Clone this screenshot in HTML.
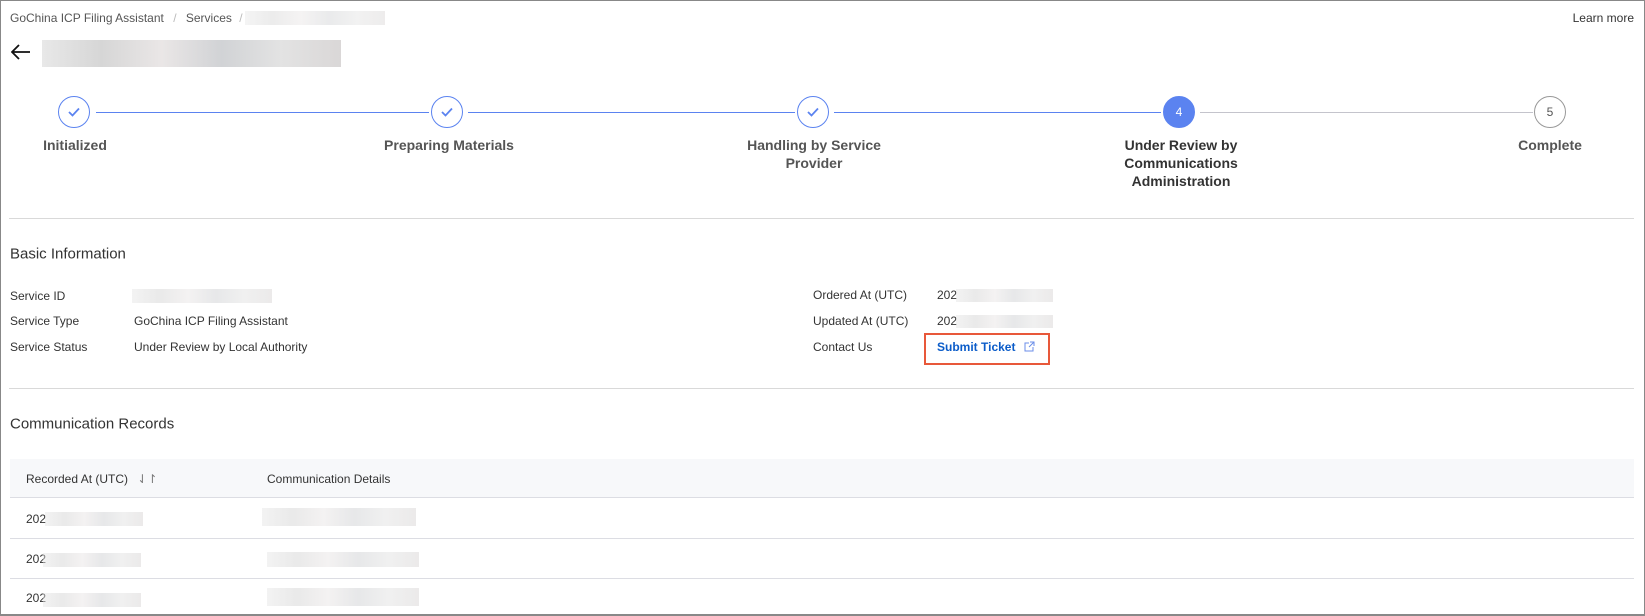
<!DOCTYPE html>
<html><head><meta charset="utf-8"><style>
*{margin:0;padding:0;box-sizing:border-box}
body{width:1645px;height:616px;overflow:hidden;background:#fff;font-family:"Liberation Sans",sans-serif;color:#333;font-size:12px;position:relative}
.frame{position:absolute;left:0;top:0;width:1645px;height:616px;border:1px solid #888;border-bottom:2px solid #888}
.a{position:absolute;white-space:nowrap}
.v{transform:translateY(-50%)}
.blur{position:absolute;background:linear-gradient(90deg,#e4e4e4,#cfcfcf 20%,#e6e2e2 40%,#c9cbce 60%,#dedede 80%,#d3d0d0);opacity:.85}
.circ{position:absolute;width:32px;height:32px;border-radius:50%;border:1px solid #5b83f0;top:96px;display:flex;align-items:center;justify-content:center;background:#fff}
.lbl{position:absolute;top:136px;font-weight:bold;font-size:14px;color:#555;text-align:center;line-height:18px;transform:translateX(-50%)}
.line{position:absolute;top:112px;height:1px}
.hr{position:absolute;left:9px;width:1625px;height:1px;background:#d9d9d9}
</style></head><body>
<div class="frame"></div>
<div class="a v" style="left:10px;top:18px;color:#555">GoChina ICP Filing Assistant <span style="color:#bbb;margin:0 6px">/</span> Services <span style="color:#bbb;margin:0 4px">/</span></div>
<div class="blur" style="left:245px;top:11px;width:140px;height:14px;opacity:.4"></div>
<div class="a v" style="right:11px;top:18px;color:#333">Learn more</div>
<svg class="a" style="left:11px;top:44px" width="20" height="16" viewBox="0 0 20 16"><path d="M19 8H2M8 1L1 8l7 7" fill="none" stroke="#111" stroke-width="1.8"/></svg>
<div class="blur" style="left:42px;top:40px;width:299px;height:27px"></div>

<div class="line" style="left:96px;width:333px;background:#5b83f0"></div>
<div class="line" style="left:468px;width:327px;background:#5b83f0"></div>
<div class="line" style="left:834px;width:327px;background:#5b83f0"></div>
<div class="line" style="left:1200px;width:333px;background:#c4c4cc"></div>
<div class="circ" style="left:58px"><svg width="12" height="10"><path d="M1 5l3.5 3.5L11 1.5" fill="none" stroke="#5b83f0" stroke-width="1.8"/></svg></div>
<div class="circ" style="left:431px"><svg width="12" height="10"><path d="M1 5l3.5 3.5L11 1.5" fill="none" stroke="#5b83f0" stroke-width="1.8"/></svg></div>
<div class="circ" style="left:797px"><svg width="12" height="10"><path d="M1 5l3.5 3.5L11 1.5" fill="none" stroke="#5b83f0" stroke-width="1.8"/></svg></div>
<div class="circ" style="left:1163px;background:#5b83f0;color:#fff;font-size:12px">4</div>
<div class="circ" style="left:1534px;border-color:#999;color:#555;font-size:12px">5</div>
<div class="lbl" style="left:75px">Initialized</div>
<div class="lbl" style="left:449px">Preparing Materials</div>
<div class="lbl" style="left:814px">Handling by Service<br>Provider</div>
<div class="lbl" style="left:1181px;color:#333">Under Review by<br>Communications<br>Administration</div>
<div class="lbl" style="left:1550px">Complete</div>

<div class="hr" style="top:218px"></div>
<div class="a v" style="left:10px;top:254px;font-size:15px;color:#333">Basic Information</div>
<div class="a v" style="left:10px;top:296px">Service ID</div>
<div class="blur" style="left:132px;top:289px;width:140px;height:14px;opacity:.45"></div>
<div class="a v" style="left:10px;top:321px">Service Type</div>
<div class="a v" style="left:134px;top:321px">GoChina ICP Filing Assistant</div>
<div class="a v" style="left:10px;top:347px">Service Status</div>
<div class="a v" style="left:134px;top:347px">Under Review by Local Authority</div>
<div class="a v" style="left:813px;top:295px">Ordered At (UTC)</div>
<div class="a v" style="left:937px;top:295px">202</div>
<div class="blur" style="left:956px;top:289px;width:97px;height:13px;opacity:.45"></div>
<div class="a v" style="left:813px;top:321px">Updated At (UTC)</div>
<div class="a v" style="left:937px;top:321px">202</div>
<div class="blur" style="left:956px;top:315px;width:97px;height:13px;opacity:.45"></div>
<div class="a v" style="left:813px;top:347px">Contact Us</div>
<div class="a" style="left:924px;top:333px;width:126px;height:32px;border:2px solid #e8583a"></div>
<div class="a v" style="left:937px;top:347px;color:#0b5cc9;font-weight:bold">Submit Ticket</div>
<svg class="a" style="left:1024px;top:341px" width="11" height="11" viewBox="0 0 11 11"><path d="M9 6v4H1V2h4M6 1h4v4M10 1L5 6" fill="none" stroke="#6b8ee8" stroke-width="1"/></svg>

<div class="hr" style="top:388px"></div>
<div class="a v" style="left:10px;top:424px;font-size:15px">Communication Records</div>
<div class="a" style="left:10px;top:459px;width:1624px;height:39px;background:#f7f8fa;border-bottom:1px solid #dcdde3"></div>
<div class="a v" style="left:26px;top:479px">Recorded At (UTC) <span style="color:#777;margin-left:6px;font-size:12px">⇃↾</span></div>
<div class="a v" style="left:267px;top:479px">Communication Details</div>
<div class="a" style="left:10px;top:538px;width:1624px;height:1px;background:#dcdde3"></div>
<div class="a" style="left:10px;top:578px;width:1624px;height:1px;background:#dcdde3"></div>
<div class="a v" style="left:26px;top:519px">202</div><div class="blur" style="left:45px;top:512px;width:98px;height:14px;opacity:.45"></div><div class="blur" style="left:262px;top:508px;width:154px;height:18px;opacity:.45"></div>
<div class="a v" style="left:26px;top:559px">202</div><div class="blur" style="left:43px;top:553px;width:98px;height:14px;opacity:.45"></div><div class="blur" style="left:267px;top:552px;width:152px;height:15px;opacity:.45"></div>
<div class="a v" style="left:26px;top:598px">202</div><div class="blur" style="left:43px;top:593px;width:98px;height:14px;opacity:.45"></div><div class="blur" style="left:267px;top:588px;width:152px;height:18px;opacity:.45"></div>
</body></html>
